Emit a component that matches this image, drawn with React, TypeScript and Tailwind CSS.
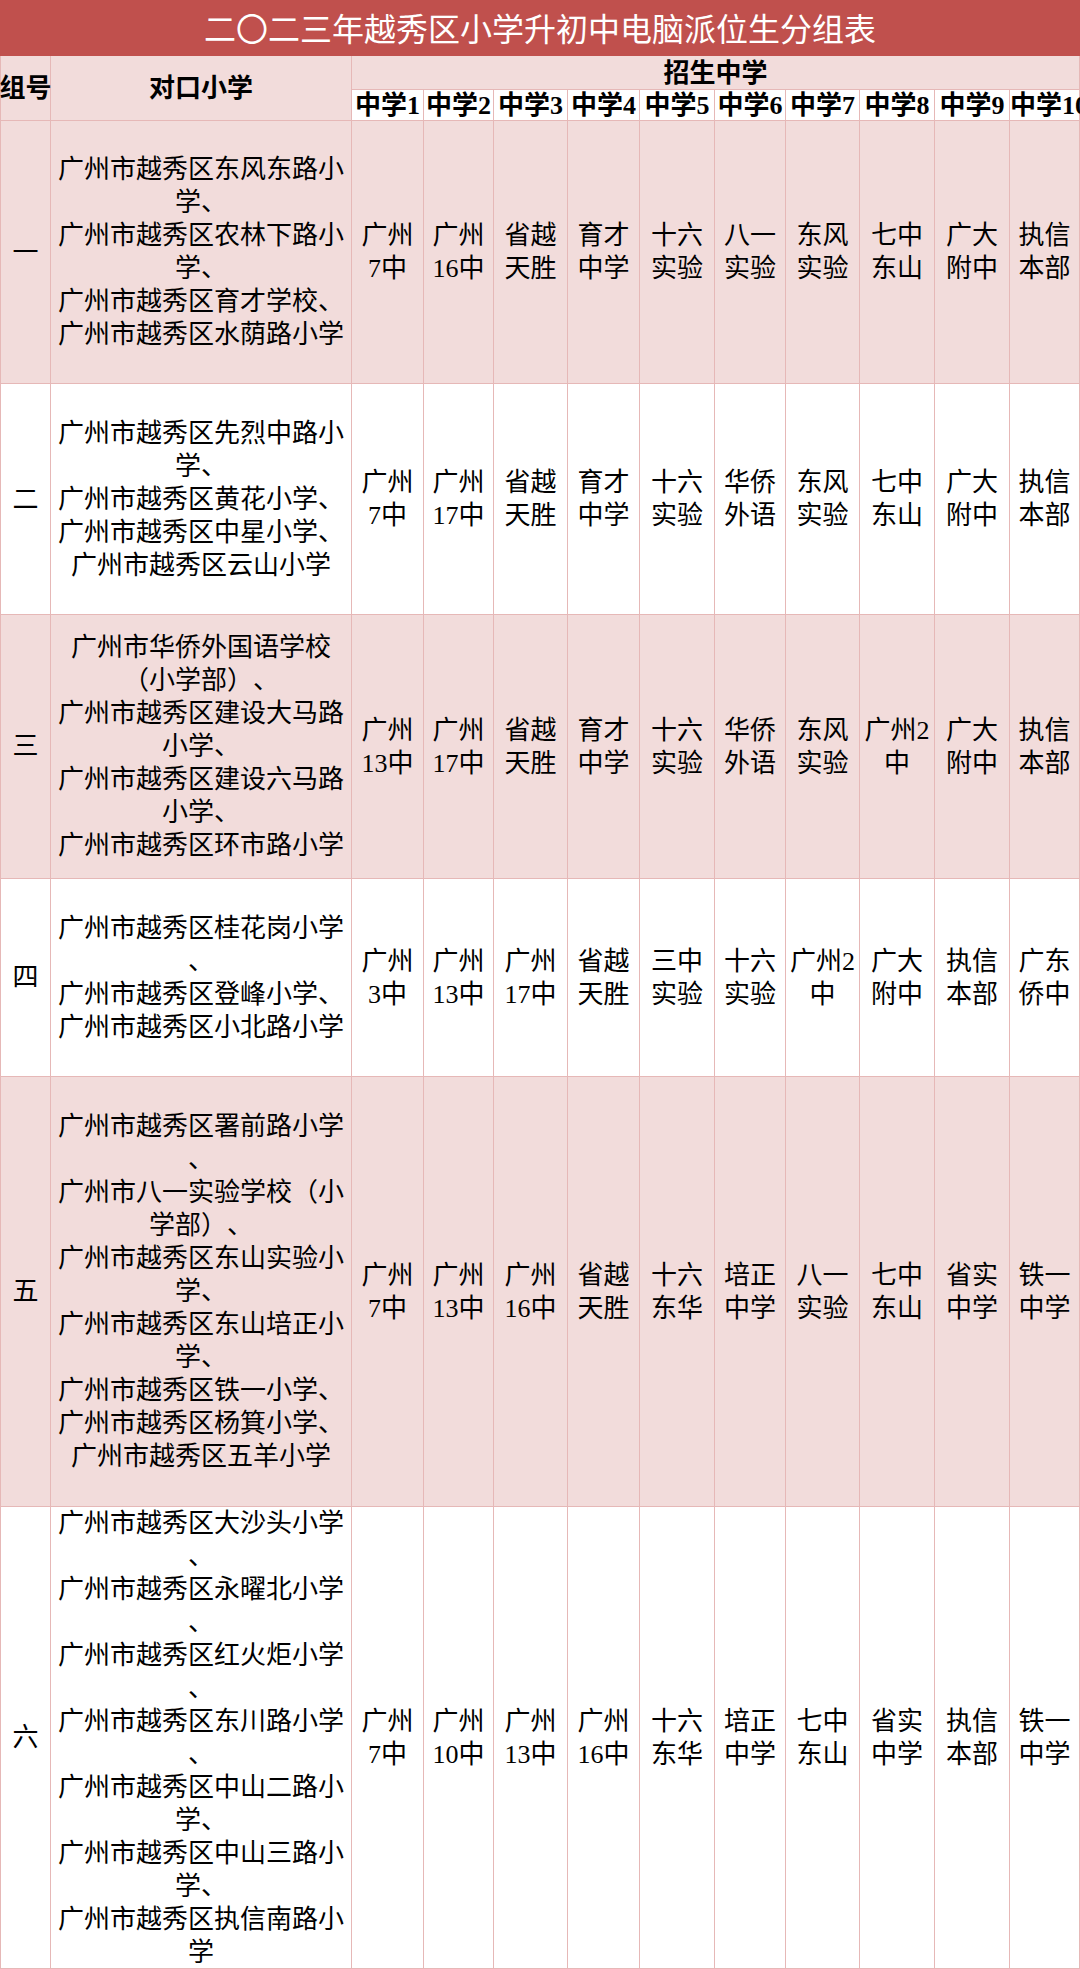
import React from "react";

type Row = {
  group: string;
  bg: string;
  schools: string[];
  middle: string[][];
};

const rows: Row[] = [
  {
    group: "一",
    bg: "bg-[#f2dcdb]",
    schools: [
      "广州市越秀区东风东路小",
      "学、",
      "广州市越秀区农林下路小",
      "学、",
      "广州市越秀区育才学校、",
      "广州市越秀区水荫路小学",
    ],
    middle: [
      ["广州", "7中"],
      ["广州", "16中"],
      ["省越", "天胜"],
      ["育才", "中学"],
      ["十六", "实验"],
      ["八一", "实验"],
      ["东风", "实验"],
      ["七中", "东山"],
      ["广大", "附中"],
      ["执信", "本部"],
    ],
  },
  {
    group: "二",
    bg: "bg-white",
    schools: [
      "广州市越秀区先烈中路小",
      "学、",
      "广州市越秀区黄花小学、",
      "广州市越秀区中星小学、",
      "广州市越秀区云山小学",
    ],
    middle: [
      ["广州", "7中"],
      ["广州", "17中"],
      ["省越", "天胜"],
      ["育才", "中学"],
      ["十六", "实验"],
      ["华侨", "外语"],
      ["东风", "实验"],
      ["七中", "东山"],
      ["广大", "附中"],
      ["执信", "本部"],
    ],
  },
  {
    group: "三",
    bg: "bg-[#f2dcdb]",
    schools: [
      "广州市华侨外国语学校",
      "（小学部）、",
      "广州市越秀区建设大马路",
      "小学、",
      "广州市越秀区建设六马路",
      "小学、",
      "广州市越秀区环市路小学",
    ],
    middle: [
      ["广州", "13中"],
      ["广州", "17中"],
      ["省越", "天胜"],
      ["育才", "中学"],
      ["十六", "实验"],
      ["华侨", "外语"],
      ["东风", "实验"],
      ["广州2", "中"],
      ["广大", "附中"],
      ["执信", "本部"],
    ],
  },
  {
    group: "四",
    bg: "bg-white",
    schools: [
      "广州市越秀区桂花岗小学",
      "、",
      "广州市越秀区登峰小学、",
      "广州市越秀区小北路小学",
    ],
    middle: [
      ["广州", "3中"],
      ["广州", "13中"],
      ["广州", "17中"],
      ["省越", "天胜"],
      ["三中", "实验"],
      ["十六", "实验"],
      ["广州2", "中"],
      ["广大", "附中"],
      ["执信", "本部"],
      ["广东", "侨中"],
    ],
  },
  {
    group: "五",
    bg: "bg-[#f2dcdb]",
    schools: [
      "广州市越秀区署前路小学",
      "、",
      "广州市八一实验学校（小",
      "学部）、",
      "广州市越秀区东山实验小",
      "学、",
      "广州市越秀区东山培正小",
      "学、",
      "广州市越秀区铁一小学、",
      "广州市越秀区杨箕小学、",
      "广州市越秀区五羊小学",
    ],
    middle: [
      ["广州", "7中"],
      ["广州", "13中"],
      ["广州", "16中"],
      ["省越", "天胜"],
      ["十六", "东华"],
      ["培正", "中学"],
      ["八一", "实验"],
      ["七中", "东山"],
      ["省实", "中学"],
      ["铁一", "中学"],
    ],
  },
  {
    group: "六",
    bg: "bg-white",
    schools: [
      "广州市越秀区大沙头小学",
      "、",
      "广州市越秀区永曜北小学",
      "、",
      "广州市越秀区红火炬小学",
      "、",
      "广州市越秀区东川路小学",
      "、",
      "广州市越秀区中山二路小",
      "学、",
      "广州市越秀区中山三路小",
      "学、",
      "广州市越秀区执信南路小",
      "学",
    ],
    middle: [
      ["广州", "7中"],
      ["广州", "10中"],
      ["广州", "13中"],
      ["广州", "16中"],
      ["十六", "东华"],
      ["培正", "中学"],
      ["七中", "东山"],
      ["省实", "中学"],
      ["执信", "本部"],
      ["铁一", "中学"],
    ],
  },
];

const cell =
  "border-r border-b border-[#e6b8b7] flex flex-col items-center justify-center text-center";

export default function App() {
  return (
    <div className="w-[1080px] h-[1969px] overflow-hidden bg-white text-black font-['Liberation_Serif','Noto_Sans_CJK_SC',serif] [text-spacing-trim:space-all]">
      <div className="h-[56px] bg-[#c0504d] flex items-center justify-center text-white text-[32px] leading-none pt-[4px] whitespace-nowrap">
        二〇二三年越秀区小学升初中电脑派位生分组表
      </div>
      <div className="grid grid-cols-[51px_301px_72px_70px_74px_72px_75px_71px_74px_75px_75px_70px] grid-rows-[34px_31px_263px_231px_264px_198px_430px_462px] text-[26px] leading-[33px]">
        <div
          className={`${cell} row-span-2 border-l bg-[#f2dcdb] font-bold whitespace-nowrap overflow-visible`}
        >
          组号
        </div>
        <div className={`${cell} row-span-2 bg-[#f2dcdb] font-bold`}>对口小学</div>
        <div className={`${cell} col-span-10 bg-[#f2dcdb] font-bold pt-[2px]`}>
          招生中学
        </div>
        {Array.from({ length: 10 }, (_, i) => (
          <div
            key={i}
            className={`${cell} bg-white font-bold whitespace-nowrap ${
              i === 9 ? "items-start pl-[0px] overflow-visible" : ""
            }`}
          >
            中学{i + 1}
          </div>
        ))}
        {rows.map((r) => (
          <React.Fragment key={r.group}>
            <div className={`${cell} border-l ${r.bg}`}>{r.group}</div>
            <div className={`${cell} ${r.bg}`}>
              {r.schools.map((s, i) => (
                <div key={i} className="whitespace-nowrap">
                  {s}
                </div>
              ))}
            </div>
            {r.middle.map((m, i) => (
              <div key={i} className={`${cell} ${r.bg}`}>
                {m.map((t, j) => (
                  <div key={j} className="whitespace-nowrap">
                    {t}
                  </div>
                ))}
              </div>
            ))}
          </React.Fragment>
        ))}
      </div>
    </div>
  );
}
